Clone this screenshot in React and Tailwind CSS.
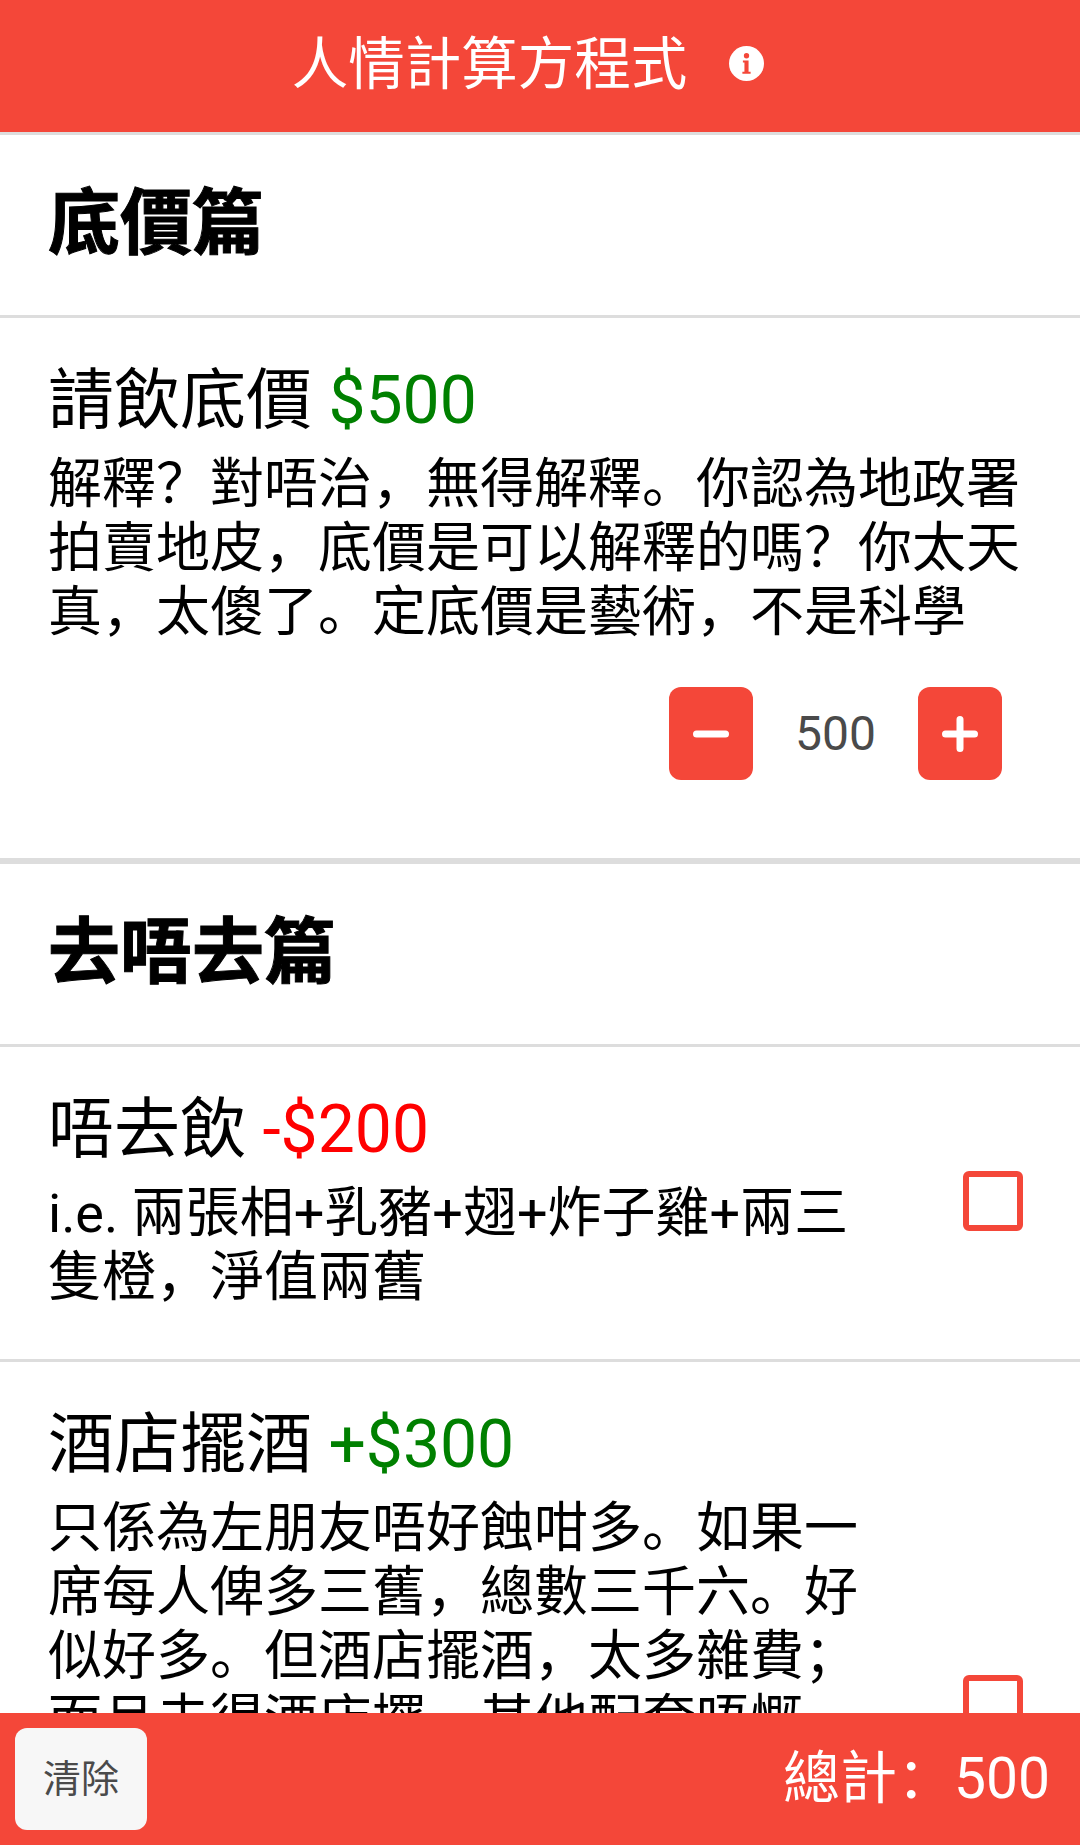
import React, { useState } from 'react';

const SectionTitle = ({ children }) => (
  <div className="flex h-[183px] items-center px-[48px] pb-[2px] border-b-[3px] border-[#dddddd]">
    <h2 className="text-[72px] font-bold leading-none text-black [-webkit-text-stroke:1px_#000000]">{children}</h2>
  </div>
);

const Price = ({ value, color }) => (
  <span className={color === 'green' ? 'text-[#008000]' : 'text-[#ff0000]'}>{value}</span>
);

const CheckItem = ({ title, price, color, lines, checked, onToggle, minHeight }) => (
  <div className={`flex items-center border-b-[3px] border-[#dddddd] pl-[48px] pr-[57px] pt-[45px] pb-[49px] ${minHeight}`}>
    <div className="w-[820px] self-start">
      <div className="text-[66px] leading-[76px] text-black">
        {title} <Price value={price} color={color} />
      </div>
      <p className="mt-[14px] text-[54px] leading-[64px] text-black">{lines}</p>
    </div>
    <button
      onClick={onToggle}
      className={`ml-auto h-[60px] w-[60px] rounded-[6px] border-[6px] border-[#f44739] ${checked ? 'bg-[#f44739]' : 'bg-white'}`}
    />
  </div>
);

const App = () => {
  const [total, setTotal] = useState(500);
  const [base, setBase] = useState(500);
  const [noGo, setNoGo] = useState(false);
  const [hotel, setHotel] = useState(false);

  const changeBase = (delta) => {
    setBase(base + delta);
    setTotal(total + delta);
  };

  return (
    <div className="relative h-[1845px] overflow-hidden bg-white font-['Roboto','Noto_Sans_CJK_SC',sans-serif]">
      {/* Header */}
      <header className="flex h-[135px] items-center justify-center border-b-[3px] border-[#dddddd] bg-[#f44739] pb-[6px] pr-[24px] text-white">
        <h1 className="pt-[5px] text-[56.5px] leading-none">人情計算方程式</h1>
        <svg className="ml-[42px] h-[35px] w-[35px]" viewBox="0 0 34 34">
          <circle cx="17" cy="17" r="17" fill="white" />
          <circle cx="17" cy="9.5" r="2.6" fill="#f44739" />
          <path d="M13.5 14h5.500v11h2v2h-8v-2h2v-9h-1.500z" fill="#f44739" />
        </svg>
      </header>

      <SectionTitle>底價篇</SectionTitle>

      {/* Base price */}
      <div className="border-b-[6px] border-[#dddddd] px-[48px] pt-[45px] pb-[78px]">
        <div className="text-[66px] leading-[76px] text-black">
          請飲底價 <Price value="$500" color="green" />
        </div>
        <p className="mt-[14px] text-[54px] leading-[64px] text-black">
          {'解釋\uFF1F對唔治\uFF0C無得解釋。你認為地政署拍賣地皮\uFF0C底價是可以解釋的嗎\uFF1F你太天真\uFF0C太傻了。定底價是藝術\uFF0C不是科學'}
        </p>
        <div className="mt-[42px] flex items-center justify-end pr-[30px]">
          <button
            onClick={() => changeBase(-100)}
            className="flex h-[93px] w-[84px] items-center justify-center rounded-[12px] bg-[#f44739]"
          >
            <svg className="h-[40px] w-[40px]" viewBox="0 0 40 40" stroke="white" strokeWidth="7" strokeLinecap="round">
              <path d="M5.500 20h29" />
            </svg>
          </button>
          <span className="w-[165px] text-center text-[48px] text-[#4a4a4a]">{base}</span>
          <button
            onClick={() => changeBase(100)}
            className="flex h-[93px] w-[84px] items-center justify-center rounded-[12px] bg-[#f44739]"
          >
            <svg className="h-[40px] w-[40px]" viewBox="0 0 40 40" stroke="white" strokeWidth="7" strokeLinecap="round">
              <path d="M5.500 20h29M20 5.500v29" />
            </svg>
          </button>
        </div>
      </div>

      <SectionTitle>去唔去篇</SectionTitle>

      <CheckItem
        title="唔去飲"
        price="-$200"
        color="red"
        lines={'i.e. 兩張相+乳豬+翅+炸子雞+兩三隻橙\uFF0C淨值兩舊'}
        checked={noGo}
        onToggle={() => setNoGo(!noGo)}
        minHeight=""
      />
      <CheckItem
        title="酒店擺酒"
        price="+$300"
        color="green"
        lines={'只係為左朋友唔好蝕咁多。如果一席每人俾多三舊\uFF0C總數三千六。好似好多。但酒店擺酒\uFF0C太多雜費\uFF1B而且去得酒店擺\uFF0C其他配套唔慨'}
        checked={hotel}
        onToggle={() => setHotel(!hotel)}
        minHeight="min-h-[692px]"
      />

      {/* Footer */}
      <footer className="absolute inset-x-0 bottom-0 flex h-[132px] items-center justify-between bg-[#f44739] pl-[15px] pr-[30px]">
        <button
          onClick={() => setTotal(0)}
          className="flex h-[102px] w-[132px] items-center justify-center rounded-[12px] bg-[#f7f7f7] text-[38px] text-[#4a4a4a]"
        >
          清除
        </button>
        <span className="text-[57px] text-white">{'總計\uFF1A'}{total}</span>
      </footer>
    </div>
  );
};

export default App;
